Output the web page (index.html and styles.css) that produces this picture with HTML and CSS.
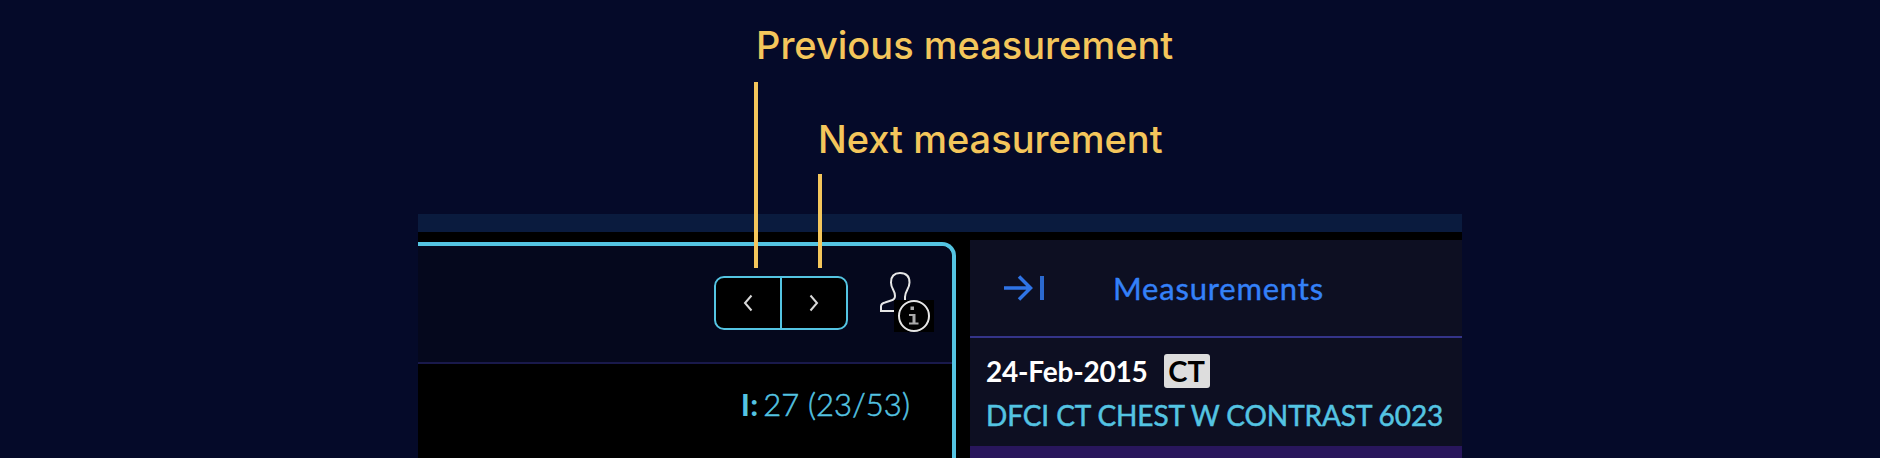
FILE: index.html
```html
<!DOCTYPE html>
<html lang="en">
<head>
<meta charset="utf-8">
<title>Measurement navigation</title>
<link rel="stylesheet" href="styles.css">
</head>
<body>
<main class="stage">
  <div class="callout callout-prev"><span class="callout-text">Previous measurement</span><i class="callout-line"></i></div>
  <div class="callout callout-next"><span class="callout-text">Next measurement</span><i class="callout-line"></i></div>
  <section class="app">
    <div class="toolbar"></div>
    <div class="workspace">
      <div class="viewport">
        <header class="viewport-bar">
          <div class="nav">
            <button class="nav-btn" aria-label="Previous"><svg width="10" height="18" viewBox="0 0 10 18"><path d="M8.500 1.500 2 9l6.500 7.500"/></svg></button>
            <button class="nav-btn" aria-label="Next"><svg width="10" height="18" viewBox="0 0 10 18"><path d="M1.500 1.500 8 9l-6.500 7.500"/></svg></button>
          </div>
          <svg class="patient" width="54" height="62" viewBox="0 0 54 62">
            <path class="outline" d="M15 39H1V34.500Q1 31.500 5 30.500L11 28.500Q15 27.500 15 24C15 18 11 17 11 10.500C11 4 14.500 1 20 1S29.500 4 29.500 10.500C29.500 17 25 19 25 25V29"/>
            <path d="M14 28h40v32H14z"/>
            <circle class="outline" cx="34" cy="44" r="15"/>
            <path class="glyph" d="M30.500 34.500h3.500V38h-3.500zM29 42h6.500V50.500h3v2H29v-2h3.500v-6.500H29z"/>
          </svg>
        </header>
        <div class="slice"><b>I:</b><span>27 (23/53)</span></div>
      </div>
      <aside class="panel">
        <header class="panel-head">
          <svg width="42" height="26" viewBox="0 0 42 26"><path d="M0 13h27M15 1.500 26.500 13 15 24.500"/><path d="M38 1v24"/></svg>
          <span class="panel-title">Measurements</span>
        </header>
        <div class="study">
          <div class="study-row"><span class="date">24-Feb-2015</span><span class="badge">CT</span></div>
          <div class="study-name">DFCI CT CHEST W CONTRAST 6023</div>
        </div>
        <div class="tracked"></div>
      </aside>
    </div>
  </section>
</main>
</body>
</html>
```
FILE: styles.css
```css
* { box-sizing: border-box; }
body { margin: 0; background: #050a29; overflow: hidden; }
.stage { position: relative; height: 458px; padding: 214px 418px 0; font-family: Lato, sans-serif; }
.callout { position: absolute; z-index: 1; color: #f4c65b; font: 500 38px/46px Inter, sans-serif; white-space: nowrap; }
.callout-prev { left: 756px; top: 22px; }
.callout-next { left: 818px; top: 116px; }
.callout-line { position: absolute; width: 4px; background: #f4c65b; }
.callout-prev .callout-line { left: -2px; top: 60px; height: 186px; }
.callout-next .callout-line { left: 0; top: 58px; height: 94px; }
.app { display: flex; flex-direction: column; width: 1044px; height: 244px; background: #000; }
.toolbar { height: 18px; background: #0a1b3e; }
.workspace { flex: 1; display: flex; gap: 14px; }
.viewport { width: 538px; height: 216px; margin-top: 10px; border: 4px solid #54c4e2; border-width: 4px 4px 0 0; border-radius: 0 14px 0 0; overflow: hidden; }
.viewport-bar { display: flex; align-items: flex-start; height: 118px; padding: 26px 18px 0 0; justify-content: flex-end; background: #05081d; border-bottom: 2px solid #19194b; }
.nav { display: flex; width: 134px; height: 54px; margin: 4px 32px 0 0; border: 2px solid #54c4e2; border-radius: 10px; background: #000; overflow: hidden; }
.nav-btn { display: flex; align-items: center; justify-content: center; width: 66px; padding: 0; border: 0; background: none; }
.nav-btn:first-child { border-right: 2px solid #54c4e2; }
.nav-btn:last-child { width: 64px; }
.nav-btn path { fill: none; stroke: #d8d8d8; stroke-width: 2; }
.patient .outline { fill: none; stroke: #e6e6e6; stroke-width: 2; }
.patient .glyph { fill: #aaa; }
.slice { display: flex; justify-content: flex-end; gap: 5px; padding: 22px 42px 0 0; color: #54c4e2; font-size: 31px; line-height: 36px; font-weight: 300; letter-spacing: 0.1px; white-space: nowrap; -webkit-text-stroke: 0.5px #54c4e2; }
.slice b { font-weight: 700; -webkit-text-stroke: 0; }
.panel { display: flex; flex-direction: column; width: 492px; margin-top: 8px; background: #0d0f22; }
.panel-head { display: flex; height: 98px; padding: 35px 0 0 34px; border-bottom: 2px solid #343489; }
.panel-head svg { fill: none; stroke: #2b69cf; stroke-width: 4; }
.panel-head svg path:first-child { stroke: #2f74e6; stroke-width: 3.500px; }
.panel-title { margin: -5px 0 0 67px; color: #3481f8; font-size: 31px; line-height: 36px; letter-spacing: 0.8px; -webkit-text-stroke: 0.4px #3481f8; }
.study { height: 108px; padding: 16px 0 0 16px; }
.study-row { display: flex; gap: 16px; height: 34px; }
.date { color: #fff; font-size: 28px; line-height: 36px; font-weight: 700; letter-spacing: -0.2px; margin-top: -1px; }
.badge { width: 46px; height: 34px; border-radius: 3px; background: #ddd; color: #000; font-size: 29px; line-height: 34px; font-weight: 700; text-align: center; }
.study-name { margin-top: 9px; color: #54c4e2; font-size: 28px; line-height: 36px; letter-spacing: -0.1px; white-space: nowrap; -webkit-text-stroke: 0.5px #54c4e2; }
.tracked { flex: 1; background: #28165c; }
```
